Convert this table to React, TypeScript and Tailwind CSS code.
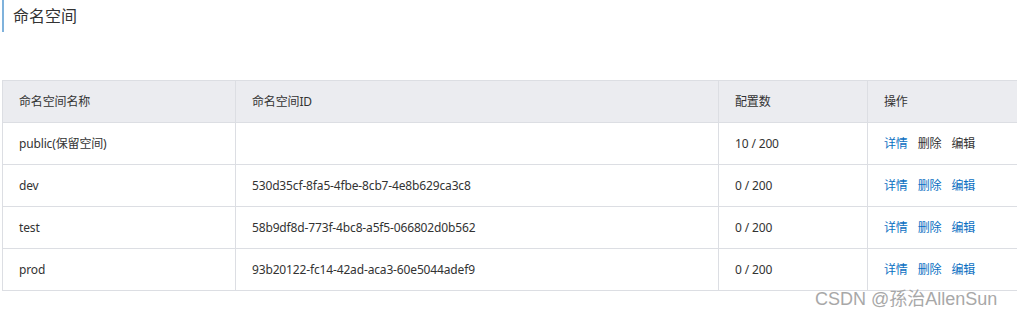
import React from 'react';

interface NamespaceRow {
  name: string;
  id: string;
  config: string;
  reserved?: boolean;
}

const rows: NamespaceRow[] = [
  { name: 'public(保留空间)', id: '', config: '10 / 200', reserved: true },
  { name: 'dev', id: '530d35cf-8fa5-4fbe-8cb7-4e8b629ca3c8', config: '0 / 200' },
  { name: 'test', id: '58b9df8d-773f-4bc8-a5f5-066802d0b562', config: '0 / 200' },
  { name: 'prod', id: '93b20122-fc14-42ad-aca3-60e5044adef9', config: '0 / 200' },
];

const font = { fontFamily: '"Noto Sans", "Noto Sans CJK SC", sans-serif' };

const App: React.FC = () => {
  return (
    <div className="relative w-[1017px] h-[318px] bg-white text-[#333] overflow-hidden" style={font}>
      <div className="ml-[2px] h-[32px] border-l-2 border-[#7fb2dc] pl-[9px] flex items-center text-[16px] text-[#333]">
        命名空间
      </div>

      <table className="mt-[48px] ml-[2px] w-[1015px] border-collapse text-[12px] tracking-[-0.15px] table-fixed">
        <colgroup>
          <col className="w-[233px]" />
          <col className="w-[483px]" />
          <col className="w-[149px]" />
          <col className="w-[150px]" />
        </colgroup>
        <thead>
          <tr className="h-[42px] bg-[#ebecf0]">
            <th className="border border-[#dcdee3] border-r-0 px-4 text-left font-normal">命名空间名称</th>
            <th className="border border-[#dcdee3] border-r-0 px-4 text-left font-normal">命名空间ID</th>
            <th className="border border-[#dcdee3] border-r-0 px-4 text-left font-normal">配置数</th>
            <th className="border border-[#dcdee3] border-r-0 px-4 text-left font-normal">操作</th>
          </tr>
        </thead>
        <tbody>
          {rows.map((r) => (
            <tr key={r.name} className="h-[42px]">
              <td className="border border-[#dcdee3] border-r-0 px-4">{r.name}</td>
              <td className="border border-[#dcdee3] border-r-0 px-4">{r.id}</td>
              <td className="border border-[#dcdee3] border-r-0 px-4">{r.config}</td>
              <td className="border border-[#dcdee3] border-r-0 px-4">
                <div className="flex gap-[10px]">
                  <span className="text-[#0a6fc2]">详情</span>
                  <span className={r.reserved ? 'text-[#333]' : 'text-[#0a6fc2]'}>删除</span>
                  <span className={r.reserved ? 'text-[#333]' : 'text-[#0a6fc2]'}>编辑</span>
                </div>
              </td>
            </tr>
          ))}
        </tbody>
      </table>

      {/* watermark */}
      <div
        className="absolute left-[815px] top-[290px] text-[18px] text-[#a8a8a8] leading-none"
        style={{ fontFamily: '"Liberation Sans", "Noto Sans CJK SC", sans-serif' }}
      >
        CSDN @孫治AllenSun
      </div>
    </div>
  );
};

export default App;
